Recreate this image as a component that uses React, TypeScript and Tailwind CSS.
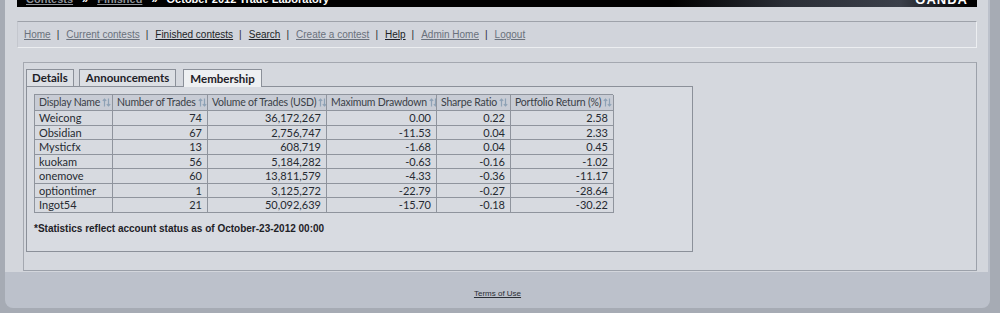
import React from "react";

const navLinks = [
  { label: "Home", strong: false },
  { label: "Current contests", strong: false },
  { label: "Finished contests", strong: true },
  { label: "Search", strong: true },
  { label: "Create a contest", strong: false },
  { label: "Help", strong: true },
  { label: "Admin Home", strong: false },
  { label: "Logout", strong: false },
];

const columns = [
  "Display Name",
  "Number of Trades",
  "Volume of Trades (USD)",
  "Maximum Drawdown",
  "Sharpe Ratio",
  "Portfolio Return (%)",
];

const rows = [
  ["Weicong", "74", "36,172,267", "0.00", "0.22", "2.58"],
  ["Obsidian", "67", "2,756,747", "-11.53", "0.04", "2.33"],
  ["Mysticfx", "13", "608,719", "-1.68", "0.04", "0.45"],
  ["kuokam", "56", "5,184,282", "-0.63", "-0.16", "-1.02"],
  ["onemove", "60", "13,811,579", "-4.33", "-0.36", "-11.17"],
  ["optiontimer", "1", "3,125,272", "-22.79", "-0.27", "-28.64"],
  ["Ingot54", "21", "50,092,639", "-15.70", "-0.18", "-30.22"],
];

function SortIcon() {
  return (
    <svg width="9" height="9" viewBox="0 0 9 9" className="ml-[2px] shrink-0" fill="none" stroke="#8ea2b6" strokeWidth="1.2">
      <path d="M2.5 8.5V1M0.8 2.8L2.5 1L4.2 2.8" />
      <path d="M6.5 0.5V8M4.8 6.2L6.5 8L8.2 6.2" />
    </svg>
  );
}

export default function App() {
  const table = "font-['Lato','Noto_Sans',sans-serif] text-[11px]";
  return (
    <div className="flex h-[313px] w-[1000px] overflow-hidden bg-[#a6abb4] font-['Liberation_Sans',Arial,sans-serif]">
      <div className="ml-[5px] flex h-[308px] w-[985px] flex-col overflow-hidden rounded-b-[8px] bg-[#bcc1cb]">
        <div className="flex h-[272px] w-[983px] flex-col bg-[#d3d6dc] pl-[12px]">
          {/* banner */}
          <div className="flex h-[7px] w-[960px] items-end justify-between overflow-hidden whitespace-nowrap bg-[linear-gradient(90deg,#000_0%,#000_68%,#2a2e36_80%,#3b404a_92%,#000_99%)] px-[9px] text-[11px] font-bold leading-[11px] text-white">
            <div className="flex -translate-y-[2px] gap-[9px]">
              <span className="text-[#8f939a] underline">Contests</span>
              <span>»</span>
              <span className="text-[#8f939a] underline">Finished</span>
              <span>»</span>
              <span>October 2012 Trade Laboratory</span>
            </div>
            <span className="-translate-y-[2px] text-[13px] tracking-[1px]">OANDA</span>
          </div>

          {/* nav */}
          <div className="mt-[14px] flex h-[27px] w-[960px] items-center border-t border-l border-t-[#9ea2aa] border-l-[#c4c7ce] border-r border-b border-r-[#eceef1] border-b-[#eceef1] bg-[#d1d4db] pl-[6px] text-[10px]">
            {navLinks.map((l, i) => (
              <React.Fragment key={l.label}>
                {i > 0 && <span className="ml-[6px] mr-[7px] text-[#2a2d33]">|</span>}
                <span className={"underline " + (l.strong ? "text-[#1c1f26]" : "text-[#6a717c]")}>{l.label}</span>
              </React.Fragment>
            ))}
          </div>

          {/* content panel */}
          <div className="ml-[6px] mt-[14px] flex h-[209px] w-[954px] flex-col border border-t-[#a4a8b0] border-l-[#a4a8b0] border-r-[#9ca1aa] border-b-[#9ca1aa] bg-[#d5d8de] pl-[1px] pt-[6px]">
            <div className={"relative z-10 flex h-[18px] items-start gap-[5px] pl-[1px] font-bold font-['Lato','Noto_Sans',sans-serif] text-[11.5px]"}>
              <div className="flex h-[17px] items-center border border-[#8b9099] border-b-0 bg-[#dcdfe4] px-[5px] text-[#1e2127]">Details</div>
              <div className="flex h-[17px] items-center border border-[#8b9099] border-b-0 bg-[#dcdfe4] px-[6px] text-[#1e2127]">Announcements</div>
              <div className="ml-[2px] flex h-[18px] items-center border border-[#8b9099] border-b-0 bg-[#eef0f2] px-[6px] text-[#1e2127]">Membership</div>
            </div>
            <div className="-mt-[1px] ml-[1px] h-[166px] w-[667px] border border-[#8b9099] bg-[#d8dbe1] px-[7px] pt-[7px]">
              <div className={"grid w-[579px] grid-cols-[78px_95px_119px_110px_74px_103px] border-l border-t border-[#8f949d] " + table}>
                {columns.map((c) => (
                  <div key={c} className="flex h-[16px] items-center overflow-hidden whitespace-nowrap border-b border-r border-[#8f949d] bg-[#c8ccd5] pl-[4px] text-[10.5px] leading-none tracking-[-0.2px] text-[#3a3f47]">
                    {c}
                    <SortIcon />
                  </div>
                ))}
                {rows.map((r) =>
                  r.map((v, j) => (
                    <div
                      key={r[0] + j}
                      className={
                        "flex h-[14.5px] items-center border-b border-r border-[#8f949d] bg-[#d7dae0] leading-none text-[#262a31] " +
                        (j === 0 ? "pl-[4px]" : "justify-end pr-[5px]")
                      }
                    >
                      {v}
                    </div>
                  ))
                )}
              </div>
              <p className="mt-[10px] text-[10px] font-bold leading-[12px] text-[#1e2126]">
                *Statistics reflect account status as of October-23-2012 00:00
              </p>
            </div>
          </div>
        </div>

        {/* footer */}
        <div className="flex justify-center pt-[17px]">
          <span className="text-[8px] leading-[10px] text-[#2a2e35] underline">Terms of Use</span>
        </div>
      </div>
    </div>
  );
}
